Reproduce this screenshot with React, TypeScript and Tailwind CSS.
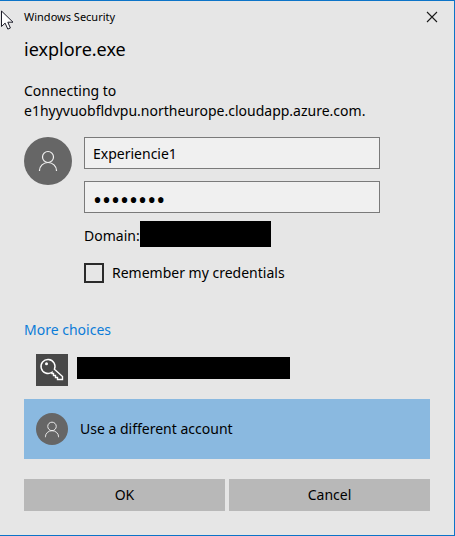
import { useState } from "react";

function PersonIcon({ className }: { className: string }) {
  return (
    <svg viewBox="0 0 20 22" fill="none" stroke="#f2f2f2" className={className} aria-hidden="true">
      <circle cx="10" cy="7" r="5.5" strokeWidth="1.2" />
      <path d="M1.5 21v-.5a8.5 8 0 0 1 17 0v.5" strokeWidth="1.2" />
    </svg>
  );
}

function KeyIcon() {
  return (
    <svg viewBox="0 0 32 32" fill="none" stroke="#ffffff" className="size-8 shrink-0 bg-[#484848]" aria-hidden="true">
      <path
        d="M18.4 15.3L26.5 22.6V25.5H21.5V23.5H19.5V21.5H17.5V19.5H16V18.2A7 7 0 1 1 18.4 15.3Z"
        strokeWidth="1.4"
      />
      <circle cx="10.5" cy="9.8" r="1.5" fill="#ffffff" stroke="none" />
    </svg>
  );
}

function Pointer() {
  return (
    <svg viewBox="0 0 13 20" className="absolute left-px top-[9px] h-5 w-[13px]" aria-hidden="true">
      <path d="M.5 1v15.5l3.6-3.4 2.7 6 2.6-1.1-2.6-5.8H12z" fill="#ffffff" stroke="#1c1c28" strokeWidth="1" />
    </svg>
  );
}

export default function App() {
  const [user, setUser] = useState("Experiencie1");
  const [password, setPassword] = useState("12345678");
  const [remember, setRemember] = useState(false);

  return (
    <main className="relative min-h-screen border-t border-r border-b border-[#0c74c8] bg-[#e6e6e6] pr-6 pb-6 pl-6 font-['Noto_Sans','Open_Sans',sans-serif] text-sm text-black">
      <Pointer />
      <header className="flex h-8 items-center justify-between">
        <span className="text-[11px]">Windows Security</span>
        <button type="button" aria-label="Close" className="-mr-3 flex size-5 items-center justify-center">
          <svg viewBox="0 0 12 12" className="size-3" fill="none" stroke="#1a1a1a" aria-hidden="true">
            <path d="M1 1l10 10M11 1L1 11" strokeWidth="1.1" />
          </svg>
        </button>
      </header>
      <h1 className="text-lg leading-8">iexplore.exe</h1>
      <p className="mt-4 leading-5">
        Connecting to
        <br />
        e1hyyvuobfldvpu.northeurope.cloudapp.azure.com.
      </p>

      <form id="credentials" className="mt-4 flex gap-3" onSubmit={(e) => e.preventDefault()}>
        <span className="flex size-12 shrink-0 items-center justify-center rounded-full bg-[#666666]">
          <PersonIcon className="h-[22px] w-5" />
        </span>
        <div className="mr-[50px] flex-1">
          <input
            type="text"
            aria-label="User name"
            value={user}
            onChange={(e) => setUser(e.target.value)}
            className="block h-8 w-full border border-[#7a7a7a] bg-[#f0f0f0] px-2 outline-none"
          />
          <input
            type="password"
            aria-label="Password"
            value={password}
            onChange={(e) => setPassword(e.target.value)}
            className="mt-3 block h-8 w-full border border-[#7a7a7a] bg-[#f0f0f0] px-2 pt-1 text-2xl leading-6 outline-none"
          />
          <div className="mt-2 flex h-[26px] items-center">
            <span className="w-14 pt-1">Domain:</span>
            <span className="h-[26px] w-[131px] bg-black" />
          </div>
          <label className="mt-4 flex h-5 items-center gap-2">
            <input
              type="checkbox"
              checked={remember}
              onChange={(e) => setRemember(e.target.checked)}
              className="size-5 appearance-none border-2 border-[#2b2b2b] checked:bg-[#0078d7]"
            />
            Remember my credentials
          </label>
        </div>
      </form>

      <a href="#choices" className="mt-[35px] block leading-6 text-[#0c7cd8]">
        More choices
      </a>
      <div id="choices" className="grid gap-px">
        <button type="button" aria-label="Saved account" className="flex h-14 w-full items-start gap-[9px] px-3 pt-3">
          <KeyIcon />
          <span className="mt-[3px] h-[22px] w-[213px] bg-black" />
        </button>
        <button type="button" className="flex h-[60px] w-full items-center gap-3 bg-[#8ab9e0] px-3">
          <span className="flex size-8 shrink-0 items-center justify-center rounded-full bg-[#666666]">
            <PersonIcon className="h-[17px] w-4" />
          </span>
          Use a different account
        </button>
      </div>

      <div className="mt-5 grid grid-cols-2 gap-1">
        <button type="submit" form="credentials" className="h-8 bg-[#b8b8b8]">
          OK
        </button>
        <button type="button" className="h-8 bg-[#b8b8b8]">
          Cancel
        </button>
      </div>
    </main>
  );
}
